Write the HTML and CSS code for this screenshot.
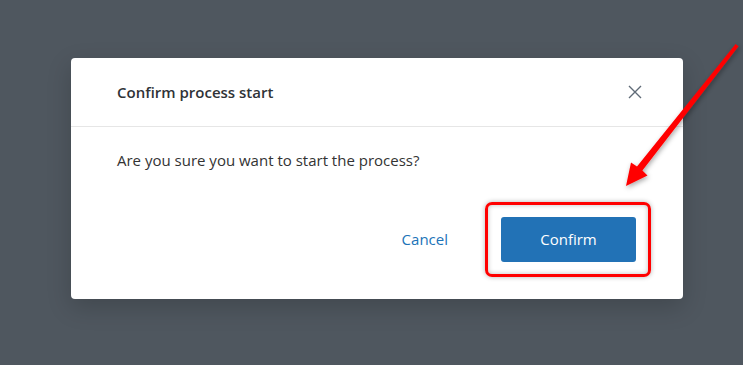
FILE: index.html
```html
<!DOCTYPE html>
<html lang="en">
<head>
   <meta charset="utf-8">
   <title>Confirm process start</title>
   <link rel="stylesheet" href="styles.css">
</head>
<body>
   <div class="modal">
      <div class="modal-header">
         <div class="modal-title">Confirm process start</div>
         <button class="close-btn" aria-label="Close">
            <svg width="14" height="14" viewBox="0 0 14 14">
               <path d="M1 1 L13 13 M13 1 L1 13" stroke="#5f6b77" stroke-width="1.4" fill="none"/>
            </svg>
         </button>
      </div>
      <div class="modal-body">Are you sure you want to start the process?</div>
      <div class="modal-footer">
         <button class="cancel-btn">Cancel</button>
         <div class="confirm-wrap">
            <button class="confirm-btn">Confirm</button>
            <div class="highlight"></div>
         </div>
      </div>
   </div>

   <svg class="arrow" width="743" height="365" viewBox="0 0 743 365">
      <defs>
         <filter id="shadow" x="-20%" y="-20%" width="140%" height="140%">
            <feDropShadow dx="1" dy="2" stdDeviation="2.5" flood-color="#000" flood-opacity="0.35"/>
         </filter>
      </defs>
      <polygon filter="url(#shadow)" fill="#ff0000"
         points="735.6,44 738.6,46.2 642.4,170.4 647.5,175.5 626,186 631,162.5 637,166.4"/>
   </svg>
</body>
</html>
```

FILE: styles.css
```css
body {
   margin: 0;
   height: 365px;
   background: #4f575f;
   font-family: 'Open Sans', 'Noto Sans', sans-serif;
   padding: 58px 0 0 71px;
   box-sizing: border-box;
   overflow: hidden;
}

.modal {
   width: 612px;
   background: #fff;
   border-radius: 4px;
   box-shadow: 0 8px 24px rgba(0, 0, 0, 0.18);
}

.modal-header {
   height: 68px;
   display: flex;
   align-items: center;
   justify-content: space-between;
   padding: 0 40px 0 46px;
   border-bottom: 1px solid #e6e6e6;
}

.modal-title {
   font-size: 15px;
   font-weight: 600;
   color: #2f3337;
}

.close-btn {
   border: none;
   background: none;
   padding: 0;
   width: 16px;
   height: 16px;
   display: flex;
   align-items: center;
   justify-content: center;
   cursor: pointer;
}

.modal-body {
   padding: 22px 46px 0;
   font-size: 15px;
   color: #333;
   line-height: 22px;
}

.modal-footer {
   display: flex;
   justify-content: flex-end;
   align-items: center;
   gap: 53px;
   padding: 46px 47px 37px;
}

.cancel-btn {
   border: none;
   background: none;
   padding: 0 0 2px;
   font-family: inherit;
   font-size: 15px;
   color: #2073b8;
   cursor: pointer;
}

.confirm-wrap {
   position: relative;
}

.confirm-btn {
   display: block;
   width: 135px;
   height: 45px;
   padding-bottom: 2px;
   border: none;
   border-radius: 3px;
   background: #2272b6;
   color: #fff;
   font-family: inherit;
   font-size: 15px;
   cursor: pointer;
}

.highlight {
   position: absolute;
   left: -16px;
   top: -15px;
   width: 160px;
   height: 69px;
   border: 3px solid #ff0000;
   border-radius: 7px;
   box-shadow: 0 0 5px rgba(0, 0, 0, 0.3), inset 0 0 5px rgba(0, 0, 0, 0.25);
   pointer-events: none;
}

.arrow {
   position: absolute;
   left: 0;
   top: 0;
   pointer-events: none;
}
```
